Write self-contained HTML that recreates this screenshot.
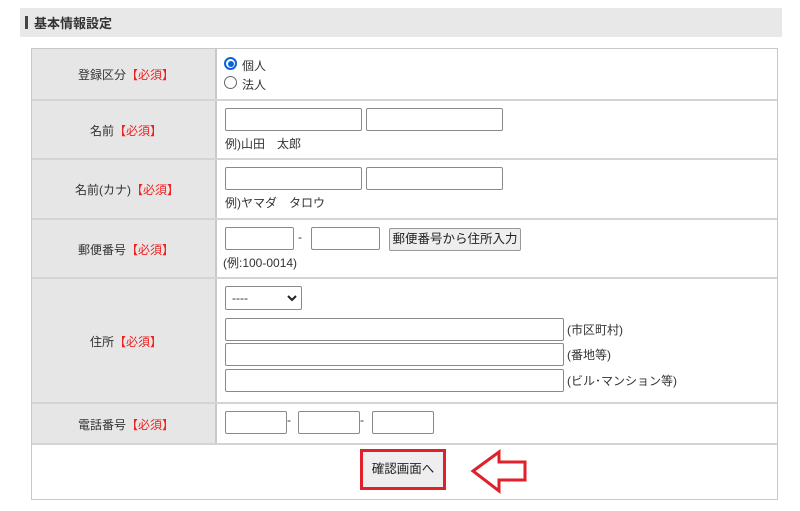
<!DOCTYPE html>
<html><head><meta charset="utf-8"><style>
*{margin:0;padding:0;box-sizing:border-box}
body{width:800px;height:511px;background:#fff;position:relative;overflow:hidden;font-family:"Liberation Sans","Noto Sans CJK JP",sans-serif;font-size:12px;color:#333}
.a{position:absolute}
.hd{left:20px;top:8px;width:762px;height:29px;background:#e8e8e8}
.hd b{position:absolute;left:5px;top:8px;width:3px;height:13px;background:#444}
.hd span{position:absolute;left:14px;top:5px;font-weight:bold;font-size:13px;color:#333}
.tb{left:31px;top:48px;width:747px;height:452px;border:1px solid #c8c8c8}
.lc{left:32px;width:185px;background:#e6e6e6;border-right:2px solid #c8c8c8;text-align:center;color:#333}
.hl{left:32px;width:745px;height:2px;background:#d4d4d4}
.r{color:#e22}
.in{position:absolute;border:1px solid #8a8a8a;border-radius:2px;background:#fff;height:23px}
.t{position:absolute;font-size:12px;color:#333;white-space:nowrap}
</style></head><body>
<div class="a hd"><b></b><span>基本情報設定</span></div>
<div class="a tb"></div>
<div class="a lc" style="top:49px;height:394px"></div>
<div class="a hl" style="top:99px"></div>
<div class="a hl" style="top:158px"></div>
<div class="a hl" style="top:218px"></div>
<div class="a hl" style="top:277px"></div>
<div class="a hl" style="top:402px"></div>
<div class="a hl" style="top:443px"></div>
<div class="t" style="left:78px;top:66px">登録区分<span class="r">【必須】</span></div>
<div class="t" style="left:90px;top:122px">名前<span class="r">【必須】</span></div>
<div class="t" style="left:75px;top:181px">名前(カナ)<span class="r">【必須】</span></div>
<div class="t" style="left:78px;top:241px">郵便番号<span class="r">【必須】</span></div>
<div class="t" style="left:90px;top:333px">住所<span class="r">【必須】</span></div>
<div class="t" style="left:78px;top:416px">電話番号<span class="r">【必須】</span></div>
<div class="a" style="left:224px;top:57px;width:13px;height:13px;border:2px solid #0a64d8;border-radius:50%"><div style="margin:1.5px;width:6px;height:6px;border-radius:50%;background:#0a64d8"></div></div>
<div class="t" style="left:242px;top:57px">個人</div>
<div class="a" style="left:224px;top:76px;width:13px;height:13px;border:1px solid #666;border-radius:50%"></div>
<div class="t" style="left:242px;top:76px">法人</div>
<div class="in" style="left:225px;top:108px;width:137px"></div>
<div class="in" style="left:366px;top:108px;width:137px"></div>
<div class="t" style="left:225px;top:135px">例)山田　太郎</div>
<div class="in" style="left:225px;top:167px;width:137px"></div>
<div class="in" style="left:366px;top:167px;width:137px"></div>
<div class="t" style="left:225px;top:194px">例)ヤマダ　タロウ</div>
<div class="in" style="left:225px;top:227px;width:69px"></div>
<div class="t" style="left:298px;top:230px">-</div>
<div class="in" style="left:311px;top:227px;width:69px"></div>
<div class="a" style="left:389px;top:228px;width:132px;height:23px;border:1px solid #999;border-radius:2px;background:#eee;font-size:12.5px;text-align:center;line-height:21px;color:#222">郵便番号から住所入力</div>
<div class="t" style="left:223px;top:254px">(例:100-0014)</div>
<div class="in" style="left:225px;top:286px;width:77px;height:24px"><span style="position:absolute;left:6px;top:4px">----</span><svg style="position:absolute;left:61px;top:7px" width="10" height="8"><path d="M1 2L5 6L9 2" stroke="#222" stroke-width="2" fill="none"/></svg></div>
<div class="in" style="left:225px;top:318px;width:339px"></div>
<div class="t" style="left:567px;top:321px">(市区町村)</div>
<div class="in" style="left:225px;top:343px;width:339px"></div>
<div class="t" style="left:567px;top:346px">(番地等)</div>
<div class="in" style="left:225px;top:369px;width:339px"></div>
<div class="t" style="left:567px;top:372px">(ビル･マンション等)</div>
<div class="in" style="left:225px;top:411px;width:62px"></div>
<div class="t" style="left:287px;top:413px">-</div>
<div class="in" style="left:298px;top:411px;width:62px"></div>
<div class="t" style="left:360px;top:413px">-</div>
<div class="in" style="left:372px;top:411px;width:62px"></div>
<div class="a" style="left:360px;top:449px;width:86px;height:41px;border:3px solid #e0202a;background:#eee;text-align:center;line-height:35px;font-size:12.5px;color:#222">確認画面へ</div>
<svg class="a" style="left:470px;top:449px" width="60" height="46"><path d="M3 22L29 3V13H55V31H29V42Z" fill="#fff" stroke="#e0202a" stroke-width="3" stroke-linejoin="miter"/></svg>
</body></html>
